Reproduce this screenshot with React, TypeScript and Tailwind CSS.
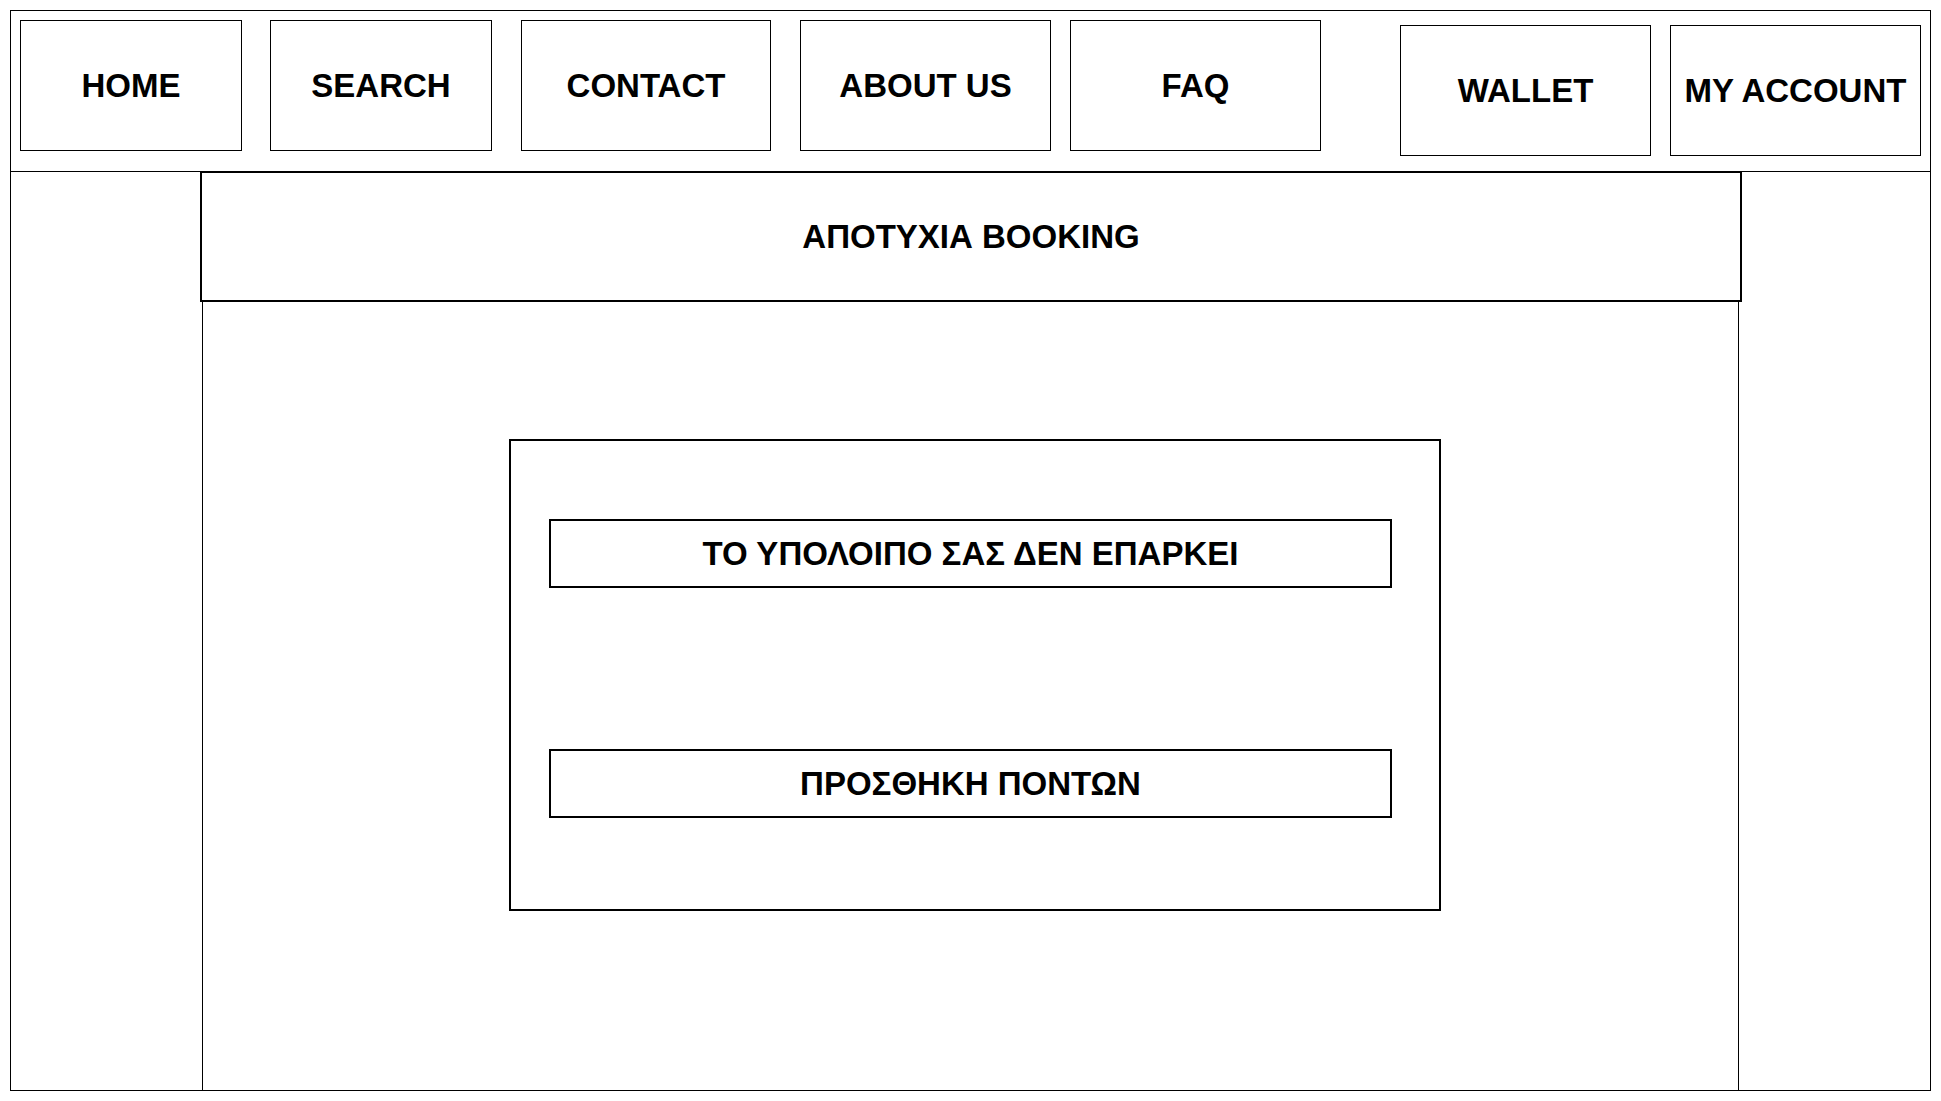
const NAV_LEFT = [
  { label: 'HOME', cls: 'w-[222px]' },
  { label: 'SEARCH', cls: 'w-[222px] ml-[28px]' },
  { label: 'CONTACT', cls: 'w-[250px] ml-[29px]' },
  { label: 'ABOUT US', cls: 'w-[251px] ml-[29px]' },
  { label: 'FAQ', cls: 'w-[251px] ml-[19px]' },
];

const NAV_RIGHT = [
  { label: 'WALLET', cls: 'w-[251px] ml-[79px]' },
  { label: 'MY ACCOUNT', cls: 'w-[251px] ml-[19px]' },
];

function NavBox({ label, cls }: { label: string; cls: string }) {
  return (
    <div className={`${cls} h-[131px] shrink-0 border border-black flex items-center justify-center whitespace-nowrap`}>
      {label}
    </div>
  );
}

export default function App() {
  return (
    <div className="min-h-screen bg-white p-[10px] font-['Liberation_Sans',Arial,sans-serif] font-bold text-[33px] leading-none text-black">
      <div className="w-[1921px] h-[1081px] border border-black flex flex-col">
        {/* Top navigation */}
        <header className="h-[161px] shrink-0 border-b border-black flex items-start pt-[9px] pl-[9px]">
          {NAV_LEFT.map((n) => (
            <NavBox key={n.label} {...n} />
          ))}
          {NAV_RIGHT.map((n) => (
            <div key={n.label} className="mt-[5px] flex">
              <NavBox {...n} />
            </div>
          ))}
        </header>

        {/* Main column */}
        <main className="flex-1 flex flex-col pl-[189px]">
          <div className="-mt-px w-[1542px] h-[131px] shrink-0 border-2 border-black flex items-center justify-center">
            ΑΠΟΤΥΧΙΑ BOOKING
          </div>

          <div className="ml-[2px] w-[1537px] flex-1 border-x border-black">
            {/* Dialog */}
            <div className="mt-[137px] ml-[306px] w-[932px] h-[472px] border-2 border-black flex flex-col pl-[38px] pt-[78px]">
              <div className="w-[843px] h-[69px] border-2 border-black flex items-center justify-center">
                ΤΟ ΥΠΟΛΟΙΠΟ ΣΑΣ ΔΕΝ ΕΠΑΡΚΕΙ
              </div>
              <button className="mt-[161px] w-[843px] h-[69px] border-2 border-black flex items-center justify-center font-bold">
                ΠΡΟΣΘΗΚΗ ΠΟΝΤΩΝ
              </button>
            </div>
          </div>
        </main>
      </div>
    </div>
  );
}
